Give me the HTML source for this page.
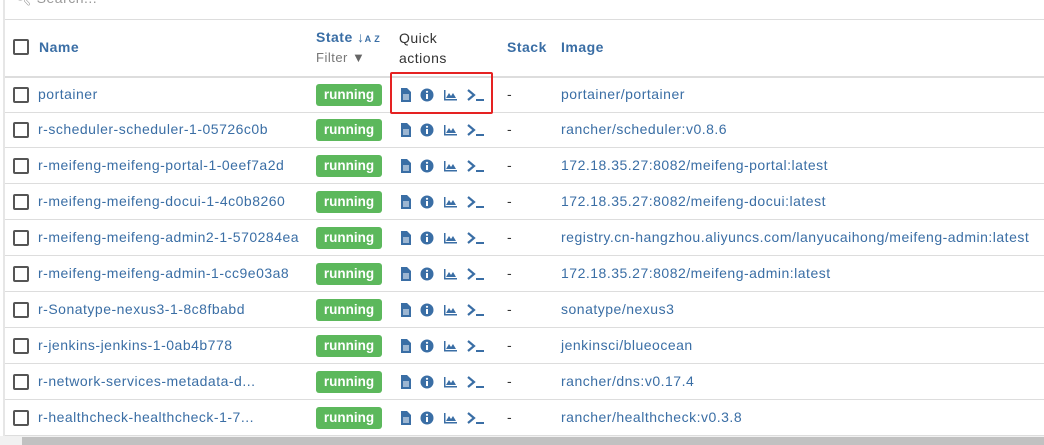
<!DOCTYPE html>
<html><head><meta charset="utf-8"><style>
*{margin:0;padding:0;box-sizing:border-box}
body{width:1044px;height:445px;overflow:hidden;background:#fff;font-family:"Liberation Sans",sans-serif;font-size:14px;letter-spacing:0.5px;color:#333;position:relative}
.vl{position:absolute;left:3px;top:0;width:2px;height:437px;background:#e6e6e6}
.search{position:absolute;left:14px;top:-10px;color:#999;font-size:14px}
.hl{position:absolute;left:5px;right:0;height:1px;background:#ddd}
.cb{position:absolute;left:13px;width:16px;height:16px;border:2px solid #555;border-radius:2px;background:#fff}
.t{position:absolute;color:#3a6ea5;white-space:nowrap}
.b{position:absolute;left:316px;width:66px;height:22px;background:#5cb85c;border-radius:3px;color:#fff;font-weight:bold;font-size:13.5px;letter-spacing:0;text-align:center;line-height:22px}
.ic{position:absolute;left:400px}
.d{position:absolute;left:507px;color:#333}
.sb{position:absolute;left:22px;right:0;top:437px;height:8px;background:#c1c1c1}
.sbt{position:absolute;left:0;right:0;top:436px;height:9px;background:#f1f1f1}
</style></head><body>
<div class="vl"></div>
<div class="search">&#x1F50D;&#xFE0E; Search...</div>
<div class="hl" style="top:19px"></div>
<div class="cb" style="top:39px"></div>
<div class="t" style="left:39px;top:39px;font-weight:bold">Name</div>
<div class="t" style="left:316px;top:29px;font-weight:bold">State ↓<span style="font-size:9px">A Z</span></div>
<div style="position:absolute;left:316px;top:50px;color:#777;font-size:13px">Filter <span style="color:#666">&#9660;</span></div>
<div style="position:absolute;left:399px;top:28px;line-height:20px;color:#333">Quick<br>actions</div>
<div class="t" style="left:507px;top:39px;font-weight:bold">Stack</div>
<div class="t" style="left:561px;top:39px;font-weight:bold">Image</div>
<div class="hl" style="top:76px;height:2px;background:#ddd"></div>
<div style="position:absolute;left:390px;top:72px;width:103px;height:42px;border:2px solid #e52222;border-radius:2px;z-index:3"></div>

<div id="rows"></div>
<script>
var R=[["portainer","portainer/portainer"],["r-scheduler-scheduler-1-05726c0b","rancher/scheduler:v0.8.6"],["r-meifeng-meifeng-portal-1-0eef7a2d","172.18.35.27:8082/meifeng-portal:latest"],["r-meifeng-meifeng-docui-1-4c0b8260","172.18.35.27:8082/meifeng-docui:latest"],["r-meifeng-meifeng-admin2-1-570284ea","registry.cn-hangzhou.aliyuncs.com/lanyucaihong/meifeng-admin:latest"],["r-meifeng-meifeng-admin-1-cc9e03a8","172.18.35.27:8082/meifeng-admin:latest"],["r-Sonatype-nexus3-1-8c8fbabd","sonatype/nexus3"],["r-jenkins-jenkins-1-0ab4b778","jenkinsci/blueocean"],["r-network-services-metadata-d...","rancher/dns:v0.17.4"],["r-healthcheck-healthcheck-1-7...","rancher/healthcheck:v0.3.8"]];
</script>
<div class="cb" style="top:87px"></div><div class="t" style="left:38px;top:86px">portainer</div><div class="b" style="top:84px">running</div><svg class="ic" style="top:87px" width="90" height="16"><g fill="#3a6ea5"><path d="M1 1h6l4 4v10H1z"/><path d="M3 8h6M3 10h6M3 12h6" stroke="#fff" stroke-width="1"/><circle cx="27" cy="8" r="6.5"/><rect x="26" y="7" width="2" height="5" fill="#fff"/><circle cx="27" cy="4.8" r="1.1" fill="#fff"/><path d="M44 3h1.5v9H57v1.5H44z"/><path d="M46 11l3-5 2 3 2-3 3 5z"/></g><path d="M68 3l6 5-6 5" stroke="#3a6ea5" stroke-width="2.2" fill="none"/><rect x="76" y="12" width="8" height="2" fill="#3a6ea5"/></svg><div class="d" style="top:86px">-</div><div class="t" style="left:561px;top:86px">portainer/portainer</div>
<div class="hl" style="top:112px"></div>
<script>
var h='';
for(var i=1;i<R.length;i++){var y=77+i*36-1;var c=y+9;
h+='<div class="cb" style="top:'+(c+1)+'px"></div><div class="t" style="left:38px;top:'+c+'px">'+R[i][0]+'</div><div class="b" style="top:'+(c-2)+'px">running</div>'+
document.querySelector('svg.ic').outerHTML.replace('top:87px','top:'+(c+1)+'px')+
'<div class="d" style="top:'+c+'px">-</div><div class="t" style="left:561px;top:'+c+'px">'+R[i][1]+'</div><div class="hl" style="top:'+(y+35)+'px"></div>';}
document.getElementById('rows').innerHTML=h;
</script>
<div class="sbt"></div><div class="sb"></div>
</body></html>
